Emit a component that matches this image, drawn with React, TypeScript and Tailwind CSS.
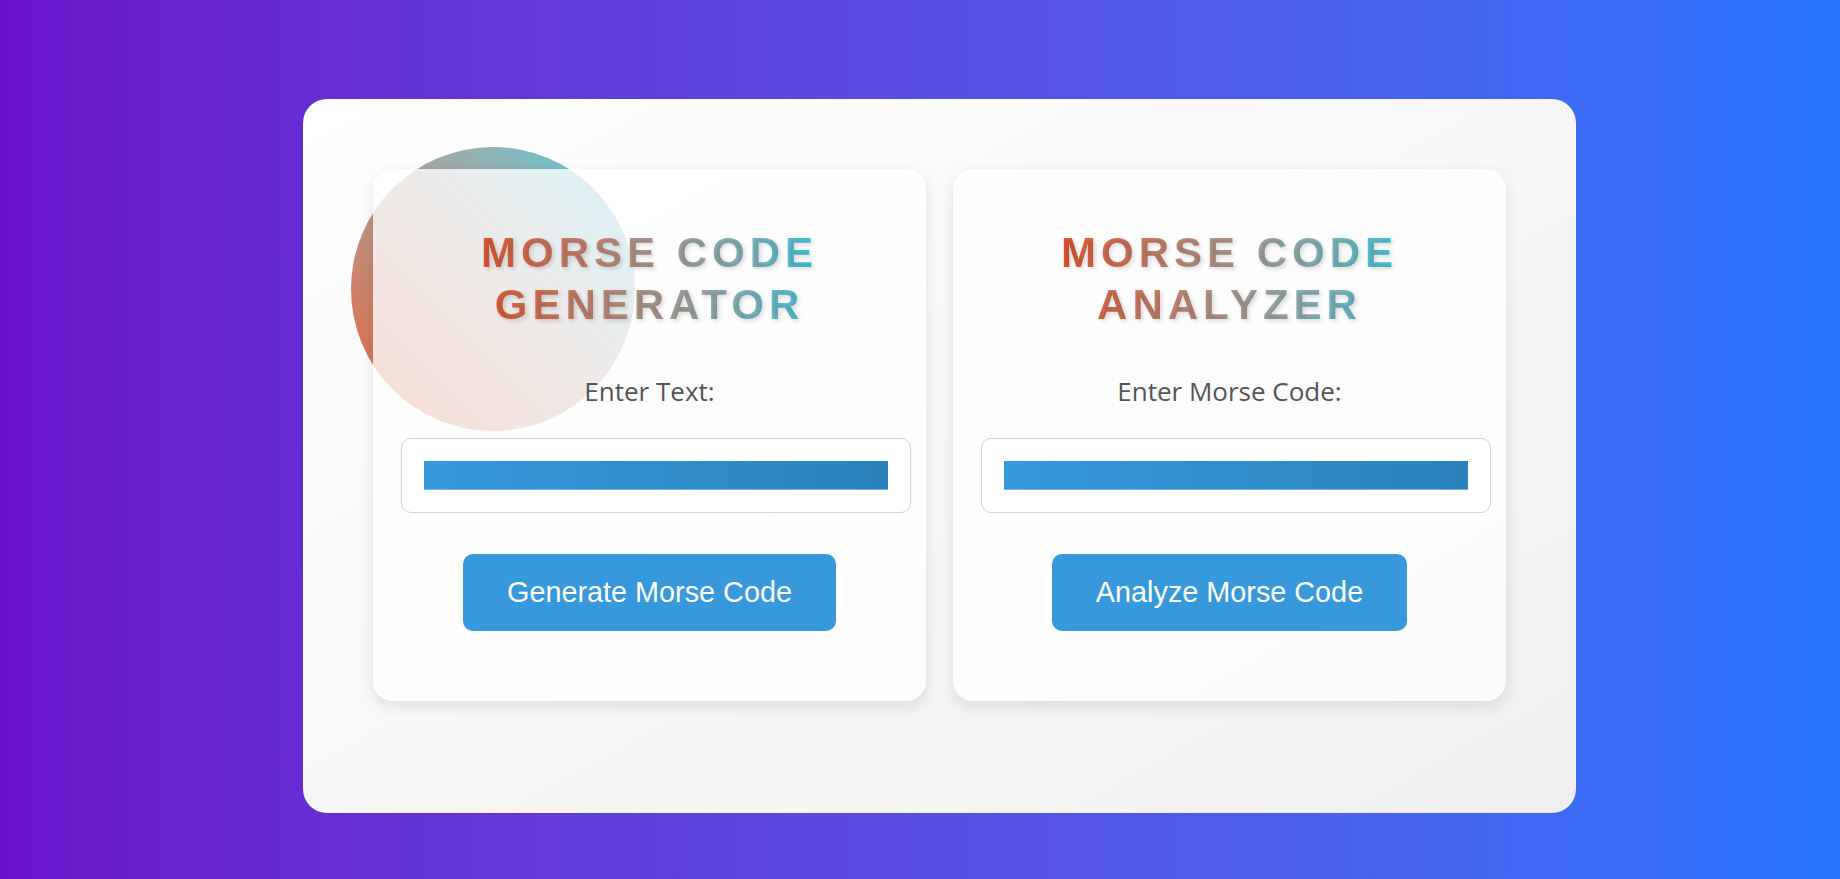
const sans = "font-['Liberation_Sans',Arial,sans-serif]";

type PanelProps = {
  lines: [string, string];
  label: string;
  action: string;
};

function Panel({ lines, label, action }: PanelProps) {
  return (
    <section className="flex flex-col items-center rounded-[20px] bg-white/[0.78] pt-[58px] pb-[70px] shadow-[0_5px_15px_rgba(0,0,0,0.1)]">
      <h2
        className={`${sans} inline-block bg-linear-to-r from-[#e0582f] to-[#38c8e0] bg-clip-text text-center text-[42px] leading-[52px] font-bold uppercase tracking-[5px] text-transparent [text-shadow:2px_2px_4px_rgba(0,0,0,0.15)]`}
      >
        {lines[0]}
        <br />
        {lines[1]}
      </h2>

      <label className="mt-[42px] font-['Open_Sans',sans-serif] text-[26px] leading-[36px] text-[#555]">
        {label}
      </label>

      {/* input box: the field itself is painted as a blue strip */}
      <div className="mt-[29px] ml-[28px] h-[75px] w-[510px] self-start rounded-[10px] border border-[#d2d2d2] bg-white px-[22px] py-[22px]">
        <div className="h-full w-full border-b border-[#6cb4e6] bg-linear-to-r from-[#3699dc] to-[#2a81ba]" />
      </div>

      <button
        className={`${sans} mt-[41px] h-[77px] rounded-[10px] bg-[#3799dc] px-[44px] text-[28.8px] text-white`}
      >
        {action}
      </button>
    </section>
  );
}

export default function App() {
  return (
    <main className="h-screen w-full overflow-hidden bg-linear-to-r from-[#6a11cb] to-[#2575fc] pt-[99px] pl-[303px]">
      <div className="relative h-[714px] w-[1273px] rounded-[24px] bg-linear-to-br from-white to-[#efefef] px-[70px] pt-[70px]">
        {/* decorative blob behind the panels */}
        <div className="absolute top-[48px] left-[48px] h-[284px] w-[284px] rounded-full bg-linear-to-tr from-[#e35d36] to-[#3dcbe0]" />

        <div className="relative grid grid-cols-2 gap-[27px]">
          <Panel
            lines={['Morse Code', 'Generator']}
            label="Enter Text:"
            action="Generate Morse Code"
          />
          <Panel
            lines={['Morse Code', 'Analyzer']}
            label="Enter Morse Code:"
            action="Analyze Morse Code"
          />
        </div>
      </div>
    </main>
  );
}
